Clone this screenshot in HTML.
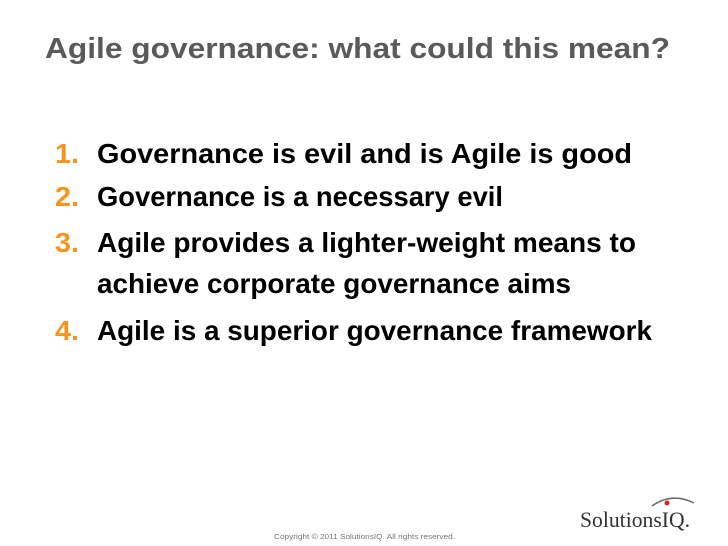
<!DOCTYPE html>
<html><head><style>
html,body{margin:0;padding:0;background:#fff;width:728px;height:546px;overflow:hidden}
</style></head><body>
<svg width="728" height="546" viewBox="0 0 728 546" xmlns="http://www.w3.org/2000/svg" font-family="Liberation Sans, sans-serif" font-weight="bold">
<text x="45" y="58" font-size="29" fill="#5a5a5a" textLength="625" lengthAdjust="spacingAndGlyphs">Agile governance:  what could this mean?</text>
<g font-size="28" fill="#f7941d">
<text x="55" y="163" textLength="24" lengthAdjust="spacingAndGlyphs">1.</text>
<text x="55" y="206" textLength="24" lengthAdjust="spacingAndGlyphs">2.</text>
<text x="55" y="252" textLength="24" lengthAdjust="spacingAndGlyphs">3.</text>
<text x="55" y="340" textLength="24" lengthAdjust="spacingAndGlyphs">4.</text>
</g>
<g font-size="28" fill="#000">
<text x="97" y="163" textLength="535" lengthAdjust="spacingAndGlyphs">Governance is evil and is Agile is good</text>
<text x="97" y="206" textLength="406" lengthAdjust="spacingAndGlyphs">Governance is a necessary evil</text>
<text x="97" y="252" textLength="539" lengthAdjust="spacingAndGlyphs">Agile provides a lighter-weight means to</text>
<text x="97" y="293" textLength="474" lengthAdjust="spacingAndGlyphs">achieve corporate governance aims</text>
<text x="97" y="340" textLength="555" lengthAdjust="spacingAndGlyphs">Agile is a superior governance framework</text>
</g>
<text x="274" y="539" font-size="7" font-weight="normal" fill="#777" textLength="181" lengthAdjust="spacingAndGlyphs">Copyright © 2011 SolutionsIQ. All rights reserved.</text>
<text x="580" y="527" font-family="Liberation Serif, serif" font-weight="normal" font-size="22" fill="#333" textLength="110" lengthAdjust="spacingAndGlyphs">SolutionsIQ.</text>
<path d="M652 506 Q672 492 694 503" fill="none" stroke="#666" stroke-width="1.5"/>
<circle cx="667" cy="503" r="2.5" fill="#e01e2b"/>
</svg>
</body></html>
